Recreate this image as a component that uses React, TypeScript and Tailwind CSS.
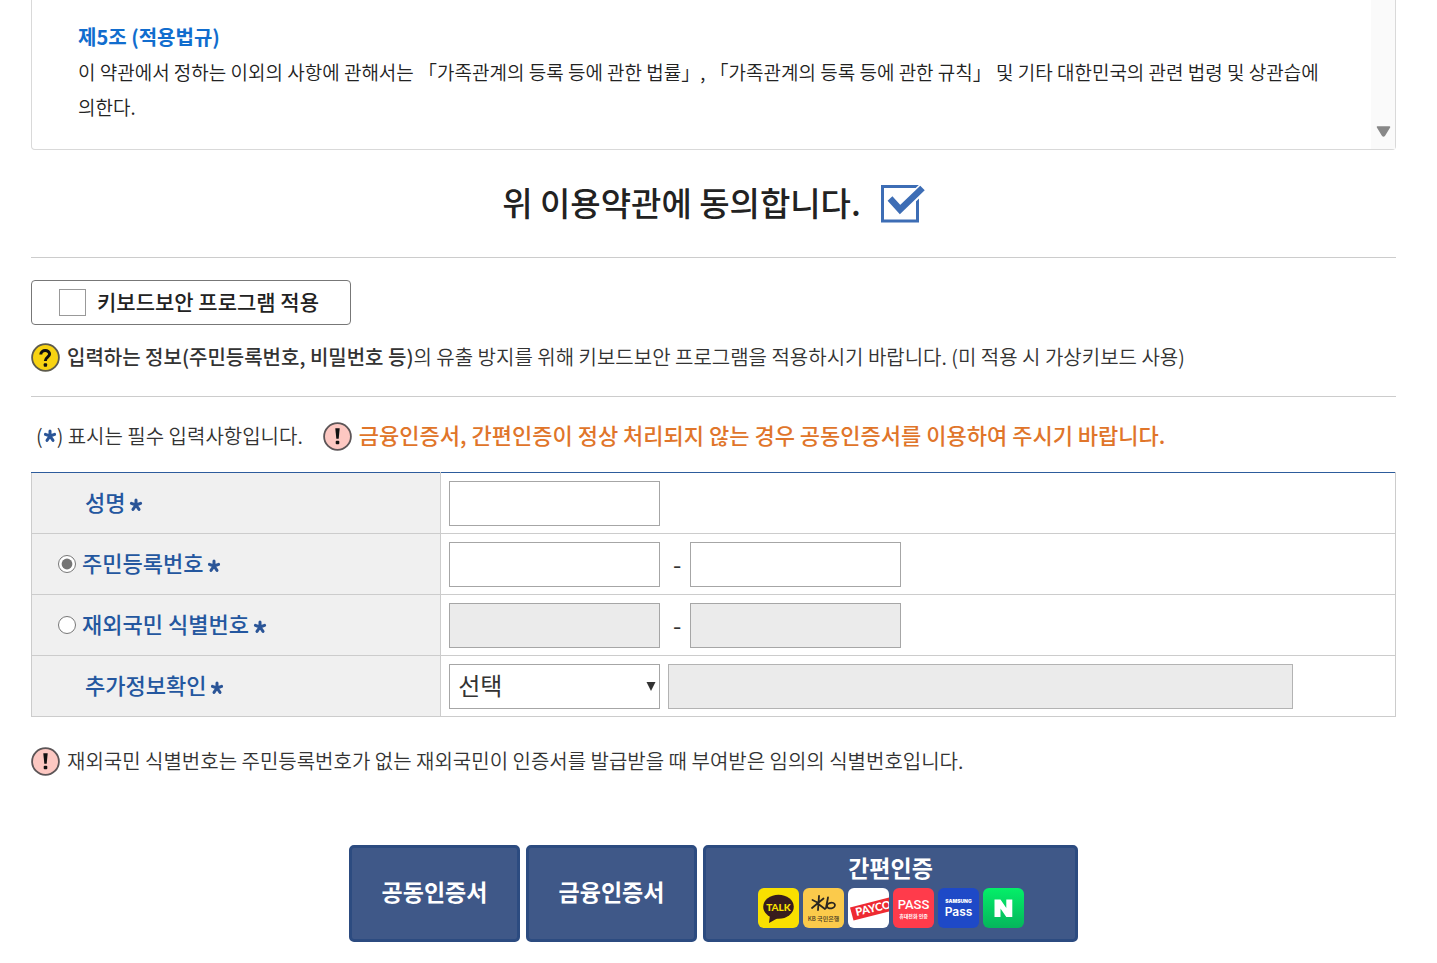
import React, { useState } from "react";

const RequiredMark = () => (
  <svg
    viewBox="0 0 14 14"
    className="inline-block w-[14px] h-[14px] shrink-0"
    aria-hidden="true"
  >
    <g stroke="#2b5597" strokeWidth="3" strokeLinecap="round">
      <path d="M7 2v5M7 7l4.6-1.6M7 7l3 4.4M7 7l-3 4.4M7 7L2.4 5.4" />
    </g>
  </svg>
);

const NoticeIcon = () => (
  <svg viewBox="0 0 29 29" className="w-[29px] h-[29px] shrink-0" aria-hidden="true">
    <circle cx="14.5" cy="14.5" r="13.4" fill="#fdc8c2" stroke="#5c5557" strokeWidth="1.8" />
    <path d="M12.3 6.2h4.4l-1 10.600h-2.400z" fill="#111" />
    <rect x="12.7" y="18.8" width="3.6" height="3.4" rx="1" fill="#111" />
  </svg>
);

const QuestionIcon = () => (
  <svg viewBox="0 0 29 29" className="w-[29px] h-[29px] shrink-0" aria-hidden="true">
    <circle cx="14.5" cy="14.5" r="13.4" fill="#f8d312" stroke="#5d5a4c" strokeWidth="1.8" />
    <path
      d="M9.8 11.6c0-5.4 8.8-5.2 8.8-.5 0 3-4.3 3.1-4.3 6.8"
      fill="none"
      stroke="#111"
      strokeWidth="3"
    />
    <rect x="12.7" y="20.2" width="3.4" height="3.6" rx="1" fill="#111" />
  </svg>
);

const providers = [
  {
    name: "카카오톡",
    art: (
      <>
        <rect width="41" height="40" rx="6" fill="#f9e000" />
        <ellipse cx="20.5" cy="18.8" rx="15.3" ry="12" fill="#371c1d" />
        <path d="M12 27l-1 8 9-5z" fill="#371c1d" />
        <text
          x="20.5"
          y="22.5"
          textAnchor="middle"
          fontSize="10"
          fontWeight="900"
          fontFamily="Lato, sans-serif"
          fill="#f9e000"
        >
          TALK
        </text>
      </>
    ),
  },
  {
    name: "KB국민은행",
    art: (
      <>
        <rect width="41" height="40" rx="6" fill="#fbca4b" />
        <g fill="none" stroke="#2b2620" strokeWidth="1.8" strokeLinecap="round" strokeLinejoin="round">
          <path d="M16 8l-1 14M9.5 12l6 3M20.5 10.5L9 20M14 15l8 6M25 9.5l-2 10.5" />
          <ellipse cx="28" cy="17.6" rx="4" ry="2.8" transform="rotate(-12 28 17.6)" />
        </g>
        <text x="20.5" y="33" textAnchor="middle" fontSize="6" fontWeight="500" fill="#453823">
          KB 국민은행
        </text>
      </>
    ),
  },
  {
    name: "PAYCO",
    art: (
      <>
        <rect width="41" height="40" rx="6" fill="#fff" />
        <path d="M2 19.500L41 9.500V23.500L5.500 32.500z" fill="#ee2a31" />
        <text
          x="8.5"
          y="28"
          transform="rotate(-13 8.5 28)"
          fontSize="11"
          fontWeight="900"
          fontFamily="Lato, sans-serif"
          fill="#fff"
        >
          PAYCO
        </text>
      </>
    ),
  },
  {
    name: "PASS",
    art: (
      <>
        <rect width="41" height="40" rx="6" fill="#ff3b4b" />
        <text
          x="20.5"
          y="21"
          textAnchor="middle"
          fontSize="13"
          fontWeight="500"
          fontFamily="Roboto, sans-serif"
          fill="#fff"
        >
          PASS
        </text>
        <text x="20.5" y="30" textAnchor="middle" fontSize="5" fill="#fff">
          휴대전화 인증
        </text>
      </>
    ),
  },
  {
    name: "삼성패스",
    art: (
      <>
        <rect width="41" height="40" rx="6" fill="#1e49c7" />
        <text
          x="20.5"
          y="15"
          textAnchor="middle"
          fontSize="5"
          fontWeight="900"
          fontFamily="Inter, sans-serif"
          fill="#fff"
        >
          SAMSUNG
        </text>
        <text
          x="20.5"
          y="27.5"
          textAnchor="middle"
          fontSize="12"
          fontWeight="600"
          fontFamily="Inter, sans-serif"
          fill="#fff"
        >
          Pass
        </text>
      </>
    ),
  },
  {
    name: "네이버",
    art: (
      <>
        <defs>
          <linearGradient id="naver" x1="0" y1="0" x2="0" y2="1">
            <stop offset="0" stopColor="#04ef68" />
            <stop offset="1" stopColor="#05b55c" />
          </linearGradient>
        </defs>
        <rect width="41" height="40" rx="6" fill="url(#naver)" />
        <path d="M11.500 11.500h6l5.800 8.500v-8.500h6v17.500h-6l-5.800-8.500V29h-6z" fill="#fff" />
      </>
    ),
  },
];

const fieldClass =
  "w-[211px] h-[45px] px-2 text-2xl bg-white border border-[#a6a6a6] disabled:bg-[#ebebeb]";
const thClass = "w-[30%] bg-[#f0f0f0] border border-[#ccc] text-left font-medium text-[22px]";
const tdClass = "border border-[#ccc] px-2 pt-2 pb-[7px]";
const certButtonClass =
  "h-[97px] rounded-[5px] border-[3px] border-[#2c4b80] bg-[#3f5888] text-white font-bold text-[23px]";

const Terms = () => (
  <section className="flex border border-t-0 border-[#d9d9d9] rounded-b">
    <div className="grow pt-[19px] pb-[25px] pl-[46px] pr-6 break-keep">
      <h2 className="text-xl leading-[35px] font-bold text-[#116dce]">제5조 (적용법규)</h2>
      <p className="text-[19px] leading-[35px] font-[350]">
        이 약관에서 정하는 이외의 사항에 관해서는 「가족관계의 등록 등에 관한 법률」, 「가족관계의 등록
        등에 관한 규칙」 및 기타 대한민국의 관련 법령 및 상관습에 의한다.
      </p>
    </div>
    <div className="w-6 shrink-0 bg-[#fafafa] flex items-end justify-center pb-3">
      <svg viewBox="0 0 15 11" className="w-[15px] h-[11px]" aria-hidden="true">
        <path
          d="M1.500 1h12L8.300 9.600q-.8 1-1.600 0z"
          fill="#888"
          stroke="#888"
          strokeWidth="1.5"
          strokeLinejoin="round"
        />
      </svg>
    </div>
  </section>
);

const Consent = () => {
  const [agreed, setAgreed] = useState(true);

  return (
    <section className="flex justify-center border-b border-[#ccc] pt-7 pb-[27px]">
      <label className="flex items-center gap-5 text-[33px] leading-[48px] font-medium">
        <span className="pb-1">위 이용약관에 동의합니다.</span>
        <span className="grid">
          <input
            type="checkbox"
            checked={agreed}
            onChange={(e) => setAgreed(e.target.checked)}
            className="appearance-none col-start-1 row-start-1 w-11 h-[38px]"
          />
          <svg
            viewBox="0 0 44 38"
            className="col-start-1 row-start-1 w-11 h-[38px] pointer-events-none"
            aria-hidden="true"
          >
            <rect x="1.5" y="1.5" width="35" height="34.5" fill="none" stroke="#3d6db5" strokeWidth="3" />
            {agreed && (
              <>
                <path d="M9 13.500l10 11L42 3" fill="none" stroke="#fff" strokeWidth="10" />
                <path d="M9 13.500l10 11L41.500 3" fill="none" stroke="#3d6db5" strokeWidth="6.5" />
              </>
            )}
          </svg>
        </span>
      </label>
    </section>
  );
};

const KeyboardSecurity = () => (
  <section className="border-b border-[#ccc] pt-[22px] pb-6">
    <label className="inline-flex items-center gap-[11px] h-[45px] w-80 pl-[27px] border border-[#777] rounded text-[21px] font-medium align-top">
      <input
        type="checkbox"
        className="appearance-none w-[27px] h-[27px] border border-[#999] bg-white checked:bg-[#3d6db5]"
      />
      <span className="pb-0.5">키보드보안 프로그램 적용</span>
    </label>
    <p className="mt-[18px] flex items-center gap-[7px] text-xl leading-[27px] font-[350] text-[#333]">
      <QuestionIcon />
      <span className="pb-0.5">
        <strong className="font-medium">입력하는 정보(주민등록번호, 비밀번호 등)</strong>의 유출 방지를
        위해 키보드보안 프로그램을 적용하시기 바랍니다. (미 적용 시 가상키보드 사용)
      </span>
    </p>
  </section>
);

const IdentityForm = () => {
  const [idType, setIdType] = useState("resident");

  const idRows = [
    { value: "resident", label: "주민등록번호" },
    { value: "overseas", label: "재외국민 식별번호" },
  ];

  return (
    <table className="w-full border-collapse text-[#24579f]">
      <tbody>
        <tr>
          <th scope="row" className={`${thClass} border-t-[#2d5c9c]`}>
            <label htmlFor="name" className="flex items-center gap-1 pl-[53px]">
              <span className="pb-[3px]">성명</span>
              <span className="flex pt-[3px]">
                <RequiredMark />
              </span>
            </label>
          </th>
          <td className={`${tdClass} border-t-[#2d5c9c]`}>
            <input id="name" type="text" className={`${fieldClass} block`} />
          </td>
        </tr>
        {idRows.map((row) => (
          <tr key={row.value}>
            <th scope="row" className={thClass}>
              <label className="flex items-center pl-[26px]">
                <input
                  type="radio"
                  name="idType"
                  value={row.value}
                  checked={idType === row.value}
                  onChange={() => setIdType(row.value)}
                  className="w-[18px] h-[18px] mr-1.5 accent-[#757575]"
                />
                <span className="mr-1 pb-[3px]">{row.label}</span>
                <span className="flex pt-[3px]">
                  <RequiredMark />
                </span>
              </label>
            </th>
            <td className={tdClass}>
              <div className="flex items-center text-[#333] text-2xl">
                <input
                  type="text"
                  aria-label={`${row.label} 앞자리`}
                  disabled={idType !== row.value}
                  className={fieldClass}
                />
                <span className="w-[30px] pl-1 pb-0.5 text-center">-</span>
                <input
                  type="password"
                  aria-label={`${row.label} 뒷자리`}
                  disabled={idType !== row.value}
                  className={fieldClass}
                />
              </div>
            </td>
          </tr>
        ))}
        <tr>
          <th scope="row" className={thClass}>
            <label htmlFor="extra" className="flex items-center gap-1 pl-[53px]">
              <span className="pb-[3px]">추가정보확인</span>
              <span className="flex pt-[3px]">
                <RequiredMark />
              </span>
            </label>
          </th>
          <td className={tdClass}>
            <div className="flex items-center gap-2 text-[#333]">
              <div className="grid items-center">
                <select
                  id="extra"
                  className={`${fieldClass} appearance-none col-start-1 row-start-1 pb-[3px]`}
                >
                  <option>선택</option>
                </select>
                <svg
                  viewBox="0 0 10 10"
                  className="col-start-1 row-start-1 justify-self-end mr-1 w-2.5 h-2.5 pointer-events-none"
                  aria-hidden="true"
                >
                  <path d="M.5 0h9L5 9z" fill="#333" />
                </svg>
              </div>
              <input
                type="text"
                aria-label="추가정보"
                disabled
                className="w-2/3 h-[45px] px-2 text-2xl border border-[#b3b3b3] bg-[#ebebeb]"
              />
            </div>
          </td>
        </tr>
      </tbody>
    </table>
  );
};

const App = () => {
  return (
    <main className="pl-[31px] pr-[41px] pb-5 bg-white text-[#222] font-['Noto_Sans_CJK_KR',sans-serif]">
      <Terms />
      <Consent />
      <KeyboardSecurity />

      <div className="flex items-center pt-[25px] pb-[21px] pl-[5px]">
        <p className="flex items-center pb-0.5 text-xl leading-[27px] font-[350] text-[#333]">
          (<RequiredMark />
          )&nbsp;표시는 필수 입력사항입니다.
        </p>
        <p className="ml-5 flex items-center gap-[7px] text-[22px] leading-[25px] font-medium text-[#e0752a]">
          <NoticeIcon />
          <span className="pb-1">
            금융인증서, 간편인증이 정상 처리되지 않는 경우 공동인증서를 이용하여 주시기 바랍니다.
          </span>
        </p>
      </div>

      <IdentityForm />

      <p className="mt-[30px] flex items-center gap-[7px] text-xl leading-[27px] font-[350] text-[#333]">
        <NoticeIcon />
        <span className="pb-0.5">
          재외국민 식별번호는 주민등록번호가 없는 재외국민이 인증서를 발급받을 때 부여받은 임의의
          식별번호입니다.
        </span>
      </p>

      <div className="mt-[69px] flex justify-center gap-1.5">
        <button type="button" className={`${certButtonClass} w-[171px] pb-1`}>
          공동인증서
        </button>
        <button type="button" className={`${certButtonClass} w-[171px] pb-1`}>
          금융인증서
        </button>
        <button
          type="button"
          className={`${certButtonClass} w-[375px] flex flex-col items-center pt-0.5 gap-1 leading-[34px]`}
        >
          간편인증
          <span className="flex gap-1">
            {providers.map((provider) => (
              <svg
                key={provider.name}
                viewBox="0 0 41 40"
                className="w-[41px] h-10"
                role="img"
                aria-label={provider.name}
              >
                {provider.art}
              </svg>
            ))}
          </span>
        </button>
      </div>
    </main>
  );
};

export default App;
